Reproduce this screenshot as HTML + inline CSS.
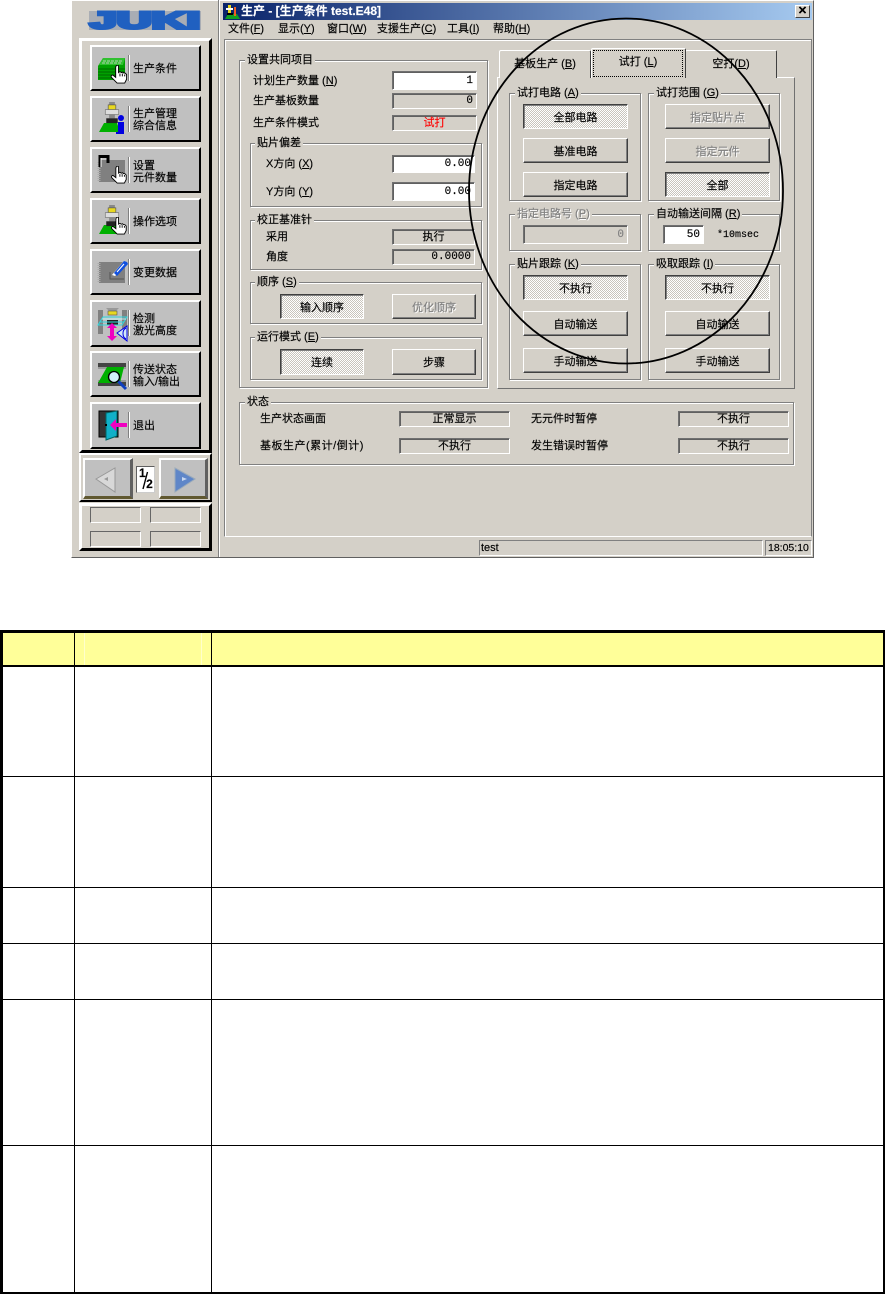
<!DOCTYPE html>
<html><head><meta charset="utf-8">
<style>
html,body{margin:0;padding:0;background:#fff}
body{position:relative;width:885px;height:1294px;overflow:hidden;font-family:"Liberation Sans","WenQuanYi Zen Hei","Noto Sans CJK SC",sans-serif;font-size:11px;color:#000;-webkit-text-stroke:.15px}
div,svg,span.a{position:absolute;box-sizing:border-box}
.t{white-space:nowrap;line-height:14px;height:14px}
.g{border:1px solid #808080;box-shadow:1px 1px 0 #fff,inset 1px 1px 0 #fff}
.l{position:absolute;top:-8px;left:5px;background:#d4d0c8;padding:0 2px;line-height:14px;height:14px;white-space:nowrap}
.b{background:#d4d0c8;border:1px solid;border-color:#fff #404040 #404040 #fff;box-shadow:inset -1px -1px 0 #808080;display:flex;align-items:center;justify-content:center;white-space:nowrap}
.p{background:repeating-conic-gradient(#fff 0 25%,#c8c4bc 0 50%) 0 0/2px 2px;border:1px solid;border-color:#404040 #fff #fff #404040;box-shadow:inset 1px 1px 0 #808080;display:flex;align-items:center;justify-content:center;white-space:nowrap}
.d{color:#808080;text-shadow:1px 1px 0 #fff}
.s{background:#d4d0c8;border:1px solid;border-color:#707070 #fff #fff #707070;box-shadow:inset 1px 1px 0 #606060;display:flex;align-items:center;justify-content:center;white-space:nowrap;line-height:12px}
.r{justify-content:flex-end;padding-right:3px}
.w{background:#fff}
.m{font-family:"Liberation Mono",monospace}
.sb{left:90px;width:111px;background:#c0c0c0;border:2px solid;border-color:#fff #000 #000 #fff}
.ic{left:90px;width:111px;height:46px}
.sep{left:128px;width:2px;background:linear-gradient(90deg,#808080 50%,#fff 50%);height:26px}
.st{left:133px;line-height:12px;white-space:nowrap}
.c{background:none;border:1px solid;border-color:#666 #fff #fff #666;width:51px;height:16px}
</style></head><body>

<!-- window -->
<div style="left:71px;top:0;width:743px;height:558px;background:#d4d0c8;border:1px solid;border-color:#fff #606060 #606060 #fff"></div>
<div style="left:218px;top:0;width:2px;height:557px;background:linear-gradient(90deg,#808080 50%,#fff 50%)"></div>

<!-- JUKI logo -->
<svg style="left:85px;top:8px" width="120" height="26"><rect x="4" y="3" width="112" height="19" fill="#a9adb4"/><text x="5" y="20.5" font-family="Liberation Sans" font-weight="bold" font-size="24" fill="#2060c0" stroke="#2060c0" stroke-width="3" textLength="110" lengthAdjust="spacingAndGlyphs">JUKI</text></svg>

<!-- side panels -->
<div style="left:79px;top:38px;width:133px;height:415px;border:3px solid;border-color:#fff #000 #000 #fff"></div>
<div style="left:79px;top:453px;width:133px;height:49px;border:2px solid;border-color:#fff #000 #000 #fff"></div>
<div style="left:79px;top:503px;width:133px;height:48px;border:3px solid;border-color:#fff #000 #000 #fff"></div>

<!-- side buttons -->
<div class="sb" style="top:45px;height:46px"></div>
<div class="sb" style="top:96px;height:46px"></div>
<div class="sb" style="top:147px;height:46px"></div>
<div class="sb" style="top:198px;height:46px"></div>
<div class="sb" style="top:249px;height:46px"></div>
<div class="sb" style="top:300px;height:47px"></div>
<div class="sb" style="top:351px;height:46px"></div>
<div class="sb" style="top:402px;height:47px"></div>
<div class="sep" style="top:55px"></div><div class="sep" style="top:106px"></div><div class="sep" style="top:157px"></div><div class="sep" style="top:208px"></div><div class="sep" style="top:259px"></div><div class="sep" style="top:310px"></div><div class="sep" style="top:361px"></div><div class="sep" style="top:412px"></div>
<div class="st" style="top:63px">生产条件</div>
<div class="st" style="top:108px">生产管理<br>综合信息</div>
<div class="st" style="top:160px">设置<br>元件数量</div>
<div class="st" style="top:216px">操作选项</div>
<div class="st" style="top:267px">变更数据</div>
<div class="st" style="top:313px">检测<br>激光高度</div>
<div class="st" style="top:364px">传送状态<br>输入/输出</div>
<div class="st" style="top:420px">退出</div>

<svg width="0" height="0" style="left:0;top:0"><defs>
<symbol id="hand" viewBox="0 0 18 20"><path d="M6 1C7 0 8 0 8.5 1L8.5 8 10 7 11.5 8 13 7.5 14 8.5 15.5 8.5 17 10 17 15 15 19 7 19 1 13C0 11 2 10 3 11L5.5 13 5.5 2Z" fill="#fff" stroke="#000" stroke-width="1"/><path d="M10 9V12M12.5 9V12M15 10V12" stroke="#000" fill="none"/></symbol>
<symbol id="noz" viewBox="0 0 20 24"><rect x="7" y="0" width="6" height="4" fill="#888"/><rect x="6" y="3" width="8" height="5" fill="#e8d820" stroke="#555" stroke-width=".7"/><rect x="3" y="8" width="14" height="5" fill="#ddd" stroke="#777" stroke-width=".7"/><rect x="7" y="13" width="6" height="4" fill="#888"/><rect x="4" y="17" width="12" height="5" fill="#222"/></symbol>
</defs></svg>

<svg class="ic" style="top:45px"><path d="M8 21L13 13H35V35H8Z" fill="#00a000"/><path d="M13 13H35L33 20H9Z" fill="#30c030"/><path d="M8 24H35M8 27H35M8 30H35M8 33H35" stroke="#006800"/><path d="M13 16H32M12 18H32" stroke="#b0d0b0" stroke-dasharray="3 1"/><use href="#hand" x="20" y="20" width="18" height="19"/></svg>
<svg class="ic" style="top:96px"><path d="M9 36L14 27H27L30 36Z" fill="#00b000"/><use href="#noz" x="12" y="6" width="20" height="23"/><rect x="28" y="26" width="6" height="12" fill="#0000e0"/><rect x="26" y="36" width="8" height="2" fill="#0000e0"/><circle cx="31" cy="22" r="3" fill="#0000e0"/></svg>
<svg class="ic" style="top:147px"><path d="M9 13H35V35H9Z" fill="#808080"/><path d="M9 15V35" stroke="#aaa" stroke-width="3" stroke-dasharray="1 1"/><path d="M10 20V9.5H18V16" fill="none" stroke="#000" stroke-width="3"/><path d="M11 20V11" stroke="#fff"/><use href="#hand" x="20" y="19" width="18" height="18"/></svg>
<svg class="ic" style="top:198px"><path d="M9 36L14 27H30L33 36Z" fill="#00b000"/><use href="#noz" x="12" y="7" width="20" height="23"/><use href="#hand" x="20" y="19" width="18" height="18"/></svg>
<svg class="ic" style="top:249px"><rect x="9" y="13" width="26" height="21" fill="#808080"/><path d="M9 14V34" stroke="#aaa" stroke-width="3" stroke-dasharray="1 1"/><path d="M20 23V30H34" stroke="#555" fill="none"/><path d="M22 26L33 13 37 14 36 17 25 27Z" fill="#fff"/><path d="M24 24L34 12 37 13 38 15 27 27" fill="#1050e0"/><path d="M27 23L34 15" stroke="#fff"/></svg>
<svg class="ic" style="top:300px"><rect x="8" y="10" width="5" height="24" fill="#808080"/><rect x="32" y="10" width="5" height="24" fill="#808080"/><path d="M16 8H29L26 11H19Z" fill="#999"/><rect x="18" y="11" width="9" height="4" fill="#e8d820" stroke="#555" stroke-width=".6"/><rect x="17" y="20" width="11" height="5" fill="#222"/><path d="M8 25L13 17H37L32 25Z" fill="none" stroke="#30d8e0"/><path d="M10 22H34" stroke="#30d8e0"/><path d="M12 19H36" stroke="#c0f0f0"/><rect x="20" y="27" width="4" height="10" fill="#f000c0"/><path d="M17 28L22 23 27 28ZM17 36L22 41 27 36Z" fill="#f000c0"/><path d="M27 33L37 26V41Z" fill="#d4e8f8" stroke="#0000e0"/><path d="M36 28C32 30 32 37 36 39" fill="none" stroke="#0000e0"/></svg>
<svg class="ic" style="top:351px"><rect x="8" y="12" width="28" height="4" fill="#444"/><rect x="8" y="16" width="28" height="2" fill="#999"/><rect x="8" y="31" width="28" height="4" fill="#444"/><rect x="8" y="29" width="28" height="2" fill="#999"/><path d="M8 32L17 16H34L30 32Z" fill="#00b000"/><path d="M28 30L36 38" stroke="#1040c0" stroke-width="3"/><circle cx="24" cy="26" r="5.5" fill="#d0f0f8" stroke="#000" stroke-width="1.3"/></svg>
<svg class="ic" style="top:402px"><rect x="9" y="9" width="19" height="26" fill="#333" stroke="#000"/><path d="M16 11L27 9V34L16 38Z" fill="#10b0c8" stroke="#066"/><rect x="15" y="22" width="2" height="2" fill="#000"/><path d="M20 23L26 17V21H37V25H26V29Z" fill="#f000c0"/></svg>

<!-- pager -->
<div style="left:83px;top:458px;width:50px;height:41px;background:#c0c0c0;border-top:2px solid #fff;border-left:2px solid #fff;border-right:3px solid #606060;border-bottom:3px solid #605830"></div>
<div style="left:159px;top:458px;width:49px;height:41px;background:#c0c0c0;border-top:2px solid #fff;border-left:2px solid #fff;border-right:3px solid #606060;border-bottom:3px solid #605830"></div>
<svg style="left:83px;top:458px" width="50" height="41"><path d="M13 21L32 10V34Z" fill="#d8d8d8" stroke="#999"/><path d="M21 21L25 19V23Z" fill="#999"/></svg>
<svg style="left:159px;top:458px" width="50" height="41"><path d="M36 21L16 10V34Z" fill="#5f86c8" stroke="#9ab"/><path d="M28 21L23 19V23Z" fill="#c8d8f0"/></svg>
<div style="left:136px;top:466px;width:19px;height:27px;background:#fff;border:1px solid;border-color:#606060 #ccc #ccc #606060"></div>
<div style="left:139px;top:467px;width:6px;height:13px;font-weight:bold;font-size:12px;line-height:13px;text-align:center">1</div>
<svg style="left:136px;top:466px" width="19" height="27"><path d="M7 23L11.5 6" stroke="#000" stroke-width="1.4"/></svg>
<div style="left:146px;top:478px;width:7px;height:13px;font-weight:bold;font-size:12px;line-height:13px;text-align:center">2</div>

<div class="c" style="left:90px;top:507px"></div><div class="c" style="left:150px;top:507px"></div>
<div class="c" style="left:90px;top:531px"></div><div class="c" style="left:150px;top:531px"></div>

<!-- title bar -->
<div style="left:223px;top:3px;width:589px;height:17px;background:linear-gradient(90deg,#0a246a,#a6caf0)"></div>
<svg style="left:224px;top:3px" width="17" height="17"><path d="M1 16L4 11H13L16 16Z" fill="#10a020"/><rect x="4" y="2" width="3" height="9" fill="#e8d820"/><rect x="2" y="5" width="7" height="2" fill="#fff"/><rect x="10" y="4" width="2" height="9" fill="#f06020"/><rect x="3" y="10" width="6" height="2" fill="#000"/></svg>
<div class="t" style="left:241px;top:4px;color:#fff;font-weight:bold;font-size:12px">生产 - [生产条件 test.E48]</div>
<div style="left:795px;top:5px;width:15px;height:13px;background:#d4d0c8;border:1px solid;border-color:#fff #404040 #404040 #fff;font-size:11px;font-weight:bold;line-height:10px;text-align:center">✕</div>

<!-- menu -->
<div class="t" style="left:228px;top:22px">文件(<u>F</u>)</div>
<div class="t" style="left:278px;top:22px">显示(<u>Y</u>)</div>
<div class="t" style="left:327px;top:22px">窗口(<u>W</u>)</div>
<div class="t" style="left:377px;top:22px">支援生产(<u>C</u>)</div>
<div class="t" style="left:447px;top:22px">工具(<u>I</u>)</div>
<div class="t" style="left:493px;top:22px">帮助(<u>H</u>)</div>

<!-- client -->
<div style="left:224px;top:39px;width:588px;height:498px;border:1px solid;border-color:#808080 #808080 #fff #808080;box-shadow:inset 1px 1px 0 #fff"></div>

<!-- left group -->
<div class="g" style="left:239px;top:60px;width:249px;height:328px"><span class="l">设置共同项目</span></div>
<div class="t" style="left:253px;top:74px">计划生产数量 (<u>N</u>)</div>
<div class="s w r m" style="left:392px;top:71px;width:85px;height:19px">1</div>
<div class="t" style="left:253px;top:94px">生产基板数量</div>
<div class="s r m" style="left:392px;top:93px;width:85px;height:16px">0</div>
<div class="t" style="left:253px;top:116px">生产条件模式</div>
<div class="s" style="left:392px;top:115px;width:85px;height:16px;color:#f00">试打</div>

<div class="g" style="left:250px;top:143px;width:232px;height:64px"><span class="l" style="left:4px">贴片偏差</span></div>
<div class="t" style="left:266px;top:157px">X方向 (<u>X</u>)</div>
<div class="s w r m" style="left:392px;top:155px;width:83px;height:18px">0.00</div>
<div class="t" style="left:266px;top:185px">Y方向 (<u>Y</u>)</div>
<div class="s w r m" style="left:392px;top:182px;width:83px;height:19px">0.00</div>

<div class="g" style="left:250px;top:220px;width:232px;height:50px"><span class="l" style="left:4px">校正基准针</span></div>
<div class="t" style="left:266px;top:230px">采用</div>
<div class="s" style="left:392px;top:229px;width:83px;height:16px">执行</div>
<div class="t" style="left:266px;top:250px">角度</div>
<div class="s r m" style="left:392px;top:249px;width:83px;height:16px">0.0000</div>

<div class="g" style="left:250px;top:282px;width:232px;height:42px"><span class="l" style="left:4px">顺序 (<u>S</u>)</span></div>
<div class="p" style="left:280px;top:294px;width:84px;height:25px">输入顺序</div>
<div class="b d" style="left:392px;top:294px;width:84px;height:25px">优化顺序</div>

<div class="g" style="left:250px;top:337px;width:232px;height:43px"><span class="l" style="left:4px">运行模式 (<u>E</u>)</span></div>
<div class="p" style="left:280px;top:349px;width:84px;height:26px">连续</div>
<div class="b" style="left:392px;top:349px;width:84px;height:26px">步骤</div>

<!-- status -->
<div class="g" style="left:239px;top:402px;width:555px;height:63px"><span class="l">状态</span></div>
<div class="t" style="left:260px;top:412px">生产状态画面</div>
<div class="s" style="left:399px;top:411px;width:111px;height:16px">正常显示</div>
<div class="t" style="left:260px;top:439px;letter-spacing:.5px">基板生产(累计/倒计)</div>
<div class="s" style="left:399px;top:438px;width:111px;height:16px">不执行</div>
<div class="t" style="left:531px;top:412px">无元件时暂停</div>
<div class="s" style="left:678px;top:411px;width:111px;height:16px">不执行</div>
<div class="t" style="left:531px;top:439px">发生错误时暂停</div>
<div class="s" style="left:678px;top:438px;width:111px;height:16px">不执行</div>

<!-- tabs -->
<div style="left:497px;top:77px;width:298px;height:312px;border:1px solid;border-color:#fff #707070 #707070 #fff"></div>
<div style="left:499px;top:50px;width:92px;height:28px;background:#d4d0c8;border:1px solid;border-color:#fff #404040 #d4d0c8 #fff;border-bottom:0;border-radius:2px 2px 0 0;text-align:center;line-height:26px">基板生产 (<u>B</u>)</div>
<div style="left:685px;top:50px;width:92px;height:28px;background:#d4d0c8;border:1px solid;border-color:#fff #404040 #d4d0c8 #fff;border-bottom:0;border-radius:2px 2px 0 0;text-align:center;line-height:26px">空打(<u>D</u>)</div>
<div style="left:591px;top:48px;width:95px;height:30px;background:#d4d0c8;border:1px solid;border-color:#fff #404040 #d4d0c8 #fff;border-bottom:0;border-radius:2px 2px 0 0"></div>
<div style="left:593px;top:50px;width:90px;height:27px;border:1px dotted #000;text-align:center;line-height:22px">试打 (<u>L</u>)</div>

<!-- test print -->
<div class="g" style="left:509px;top:93px;width:132px;height:108px"><span class="l">试打电路 (<u>A</u>)</span></div>
<div class="p" style="left:523px;top:104px;width:105px;height:25px">全部电路</div>
<div class="b" style="left:523px;top:138px;width:105px;height:25px">基准电路</div>
<div class="b" style="left:523px;top:172px;width:105px;height:25px">指定电路</div>

<div class="g" style="left:648px;top:93px;width:132px;height:108px"><span class="l">试打范围 (<u>G</u>)</span></div>
<div class="b d" style="left:665px;top:104px;width:105px;height:25px">指定贴片点</div>
<div class="b d" style="left:665px;top:138px;width:105px;height:25px">指定元件</div>
<div class="p" style="left:665px;top:172px;width:105px;height:25px">全部</div>

<div class="g" style="left:509px;top:214px;width:132px;height:37px"><span class="l d">指定电路号 (<u>P</u>)</span></div>
<div class="s r m" style="left:523px;top:225px;width:105px;height:19px;color:#808080">0</div>

<div class="g" style="left:648px;top:214px;width:132px;height:37px"><span class="l">自动输送间隔 (<u>R</u>)</span></div>
<div class="s w r m" style="left:663px;top:225px;width:41px;height:19px">50</div>
<div class="t m" style="left:717px;top:229px;font-size:10px">*10msec</div>

<div class="g" style="left:509px;top:264px;width:132px;height:116px"><span class="l">贴片跟踪 (<u>K</u>)</span></div>
<div class="p" style="left:523px;top:275px;width:105px;height:25px">不执行</div>
<div class="b" style="left:523px;top:311px;width:105px;height:25px">自动输送</div>
<div class="b" style="left:523px;top:348px;width:105px;height:25px">手动输送</div>

<div class="g" style="left:648px;top:264px;width:132px;height:116px"><span class="l">吸取跟踪 (<u>I</u>)</span></div>
<div class="p" style="left:665px;top:275px;width:105px;height:25px">不执行</div>
<div class="b" style="left:665px;top:311px;width:105px;height:25px">自动输送</div>
<div class="b" style="left:665px;top:348px;width:105px;height:25px">手动输送</div>

<!-- status bar -->
<div style="left:479px;top:540px;width:284px;height:16px;border:1px solid;border-color:#808080 #fff #fff #808080;padding-left:1px;line-height:14px">test</div>
<div style="left:765px;top:540px;width:47px;height:16px;border:1px solid;border-color:#808080 #fff #fff #808080;padding-left:2px;line-height:14px;white-space:nowrap;font-size:10.5px">18:05:10</div>

<!-- circle -->
<svg style="left:0;top:0;pointer-events:none" width="885" height="600"><ellipse cx="626" cy="191" rx="157" ry="172.5" fill="none" stroke="#000" stroke-width="1.8"/></svg>

<!-- table -->
<div style="left:3px;top:633px;width:880px;height:32px;background:#ffff99"></div>
<div style="left:84px;top:633px;width:1px;height:32px;background:#ffffcc"></div>
<div style="left:201px;top:633px;width:1px;height:32px;background:#ffffcc"></div>
<div style="left:0;top:630px;width:885px;height:3px;background:#000"></div>
<div style="left:0;top:630px;width:3px;height:664px;background:#000"></div>
<div style="left:883px;top:630px;width:2px;height:664px;background:#000"></div>
<div style="left:0;top:1292px;width:885px;height:2px;background:#000"></div>
<div style="left:74px;top:630px;width:1px;height:664px;background:#000"></div>
<div style="left:211px;top:630px;width:1px;height:664px;background:#000"></div>
<div style="left:0;top:665px;width:885px;height:2px;background:#000"></div>
<div style="left:0;top:776px;width:885px;height:1px;background:#000"></div>
<div style="left:0;top:887px;width:885px;height:1px;background:#000"></div>
<div style="left:0;top:943px;width:885px;height:1px;background:#000"></div>
<div style="left:0;top:999px;width:885px;height:1px;background:#000"></div>
<div style="left:0;top:1145px;width:885px;height:1px;background:#000"></div>
</body></html>
